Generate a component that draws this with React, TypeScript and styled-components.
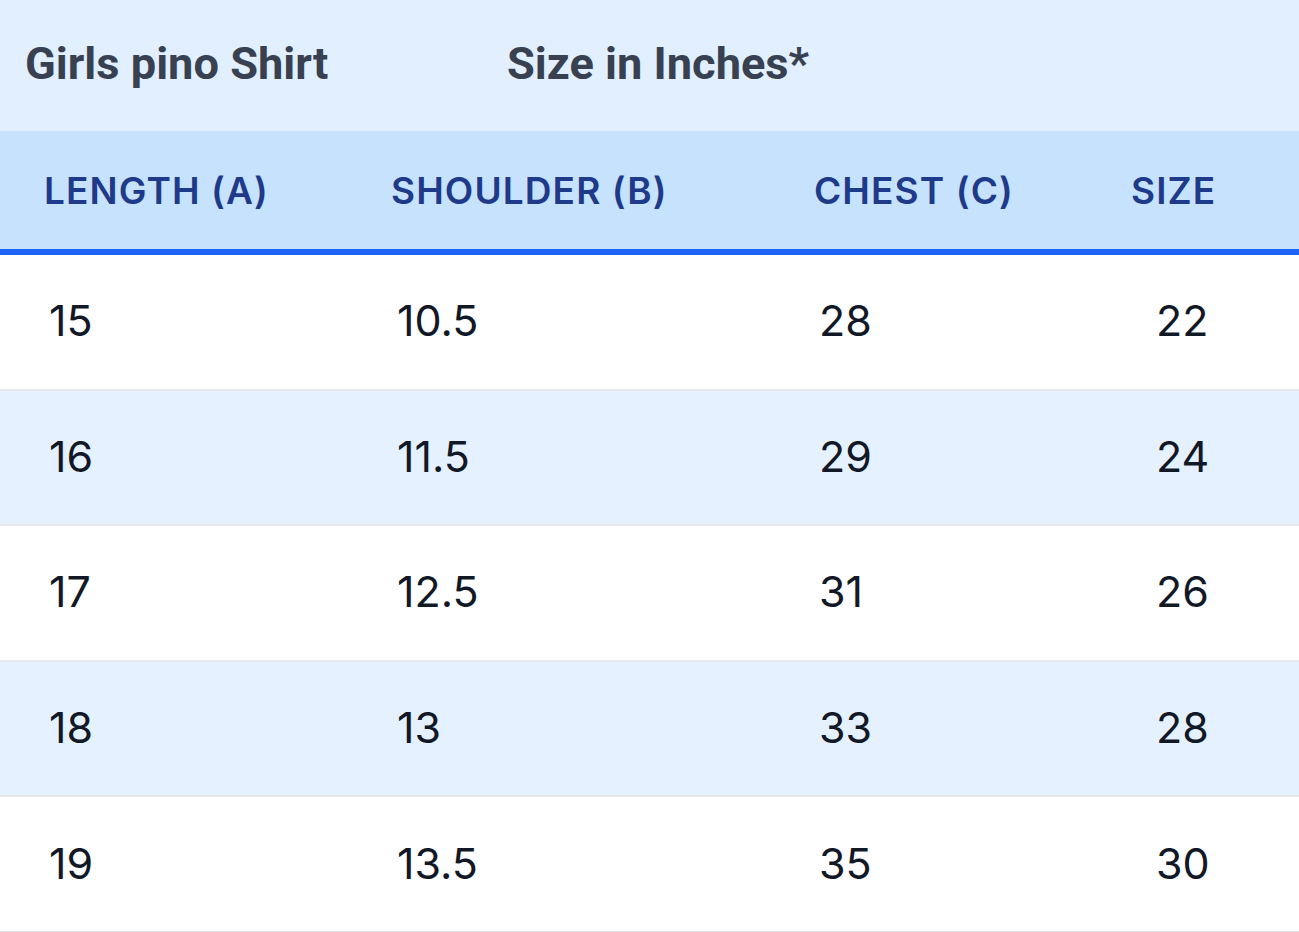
import React from "react";
import styled, { createGlobalStyle } from "styled-components";

const Global = createGlobalStyle`
  html, body { margin: 0; padding: 0; background: #ffffff; }
  #root { width: 100%; }
`;

const Table = styled.div`
  width: 1299px;
  display: flex;
  flex-direction: column;
  background: #ffffff;
`;

const TitleBar = styled.div`
  height: 131px;
  display: flex;
  align-items: center;
  padding-left: 25px;
  padding-bottom: 5px;
  background: #e1effe;
  box-sizing: border-box;
`;

const Title = styled.span<{ $w?: number }>`
  font-family: Roboto, "Liberation Sans", sans-serif;
  font-weight: 700;
  font-size: 45.2px;
  color: #374151;
  width: ${(p) => (p.$w ? `${p.$w}px` : "auto")};
  flex: none;
`;

const cols = "347px 423px 317px 212px";

const HeaderRow = styled.div`
  display: grid;
  grid-template-columns: ${cols};
  height: 124px;
  align-items: center;
  background: #c7e2fd;
  border-bottom: 6px solid #1d64f6;
  box-sizing: border-box;
`;

const HeadCell = styled.div<{ $pad: number }>`
  padding-left: ${(p) => p.$pad}px;
  font-family: Inter, "Noto Sans", sans-serif;
  font-weight: 600;
  font-size: 37px;
  letter-spacing: 0.03em;
  color: #1e3a8a;
  text-transform: uppercase;
`;

const Row = styled.div<{ $alt: boolean }>`
  display: grid;
  grid-template-columns: ${cols};
  height: 135.6px;
  align-items: center;
  background: ${(p) => (p.$alt ? "#e5f1fe" : "#ffffff")};
  border-bottom: 2px solid #e5e7eb;
  box-sizing: border-box;
`;

const Cell = styled.div<{ $pad: number }>`
  padding-left: ${(p) => p.$pad}px;
  padding-bottom: 3px;
  font-family: Inter, "Noto Sans", sans-serif;
  font-weight: 400;
  font-size: 43px;
  color: #111827;
`;

const headers = [
  { label: "Length (A)", pad: 44 },
  { label: "Shoulder (B)", pad: 44 },
  { label: "Chest (C)", pad: 44 },
  { label: "Size", pad: 44 },
];
const bodyPads = [49, 50, 49, 69];

const data = [
  ["15", "10.5", "28", "22"],
  ["16", "11.5", "29", "24"],
  ["17", "12.5", "31", "26"],
  ["18", "13", "33", "28"],
  ["19", "13.5", "35", "30"],
];

export default function App() {
  return (
    <>
      <Global />
      <Table>
        <TitleBar>
          <Title $w={482}>Girls pino Shirt</Title>
          <Title>Size in Inches*</Title>
        </TitleBar>
        <HeaderRow>
          {headers.map((h) => (
            <HeadCell key={h.label} $pad={h.pad}>
              {h.label}
            </HeadCell>
          ))}
        </HeaderRow>
        {data.map((r, i) => (
          <Row key={i} $alt={i % 2 === 1}>
            {r.map((v, j) => (
              <Cell key={j} $pad={bodyPads[j]}>
                {v}
              </Cell>
            ))}
          </Row>
        ))}
      </Table>
    </>
  );
}
